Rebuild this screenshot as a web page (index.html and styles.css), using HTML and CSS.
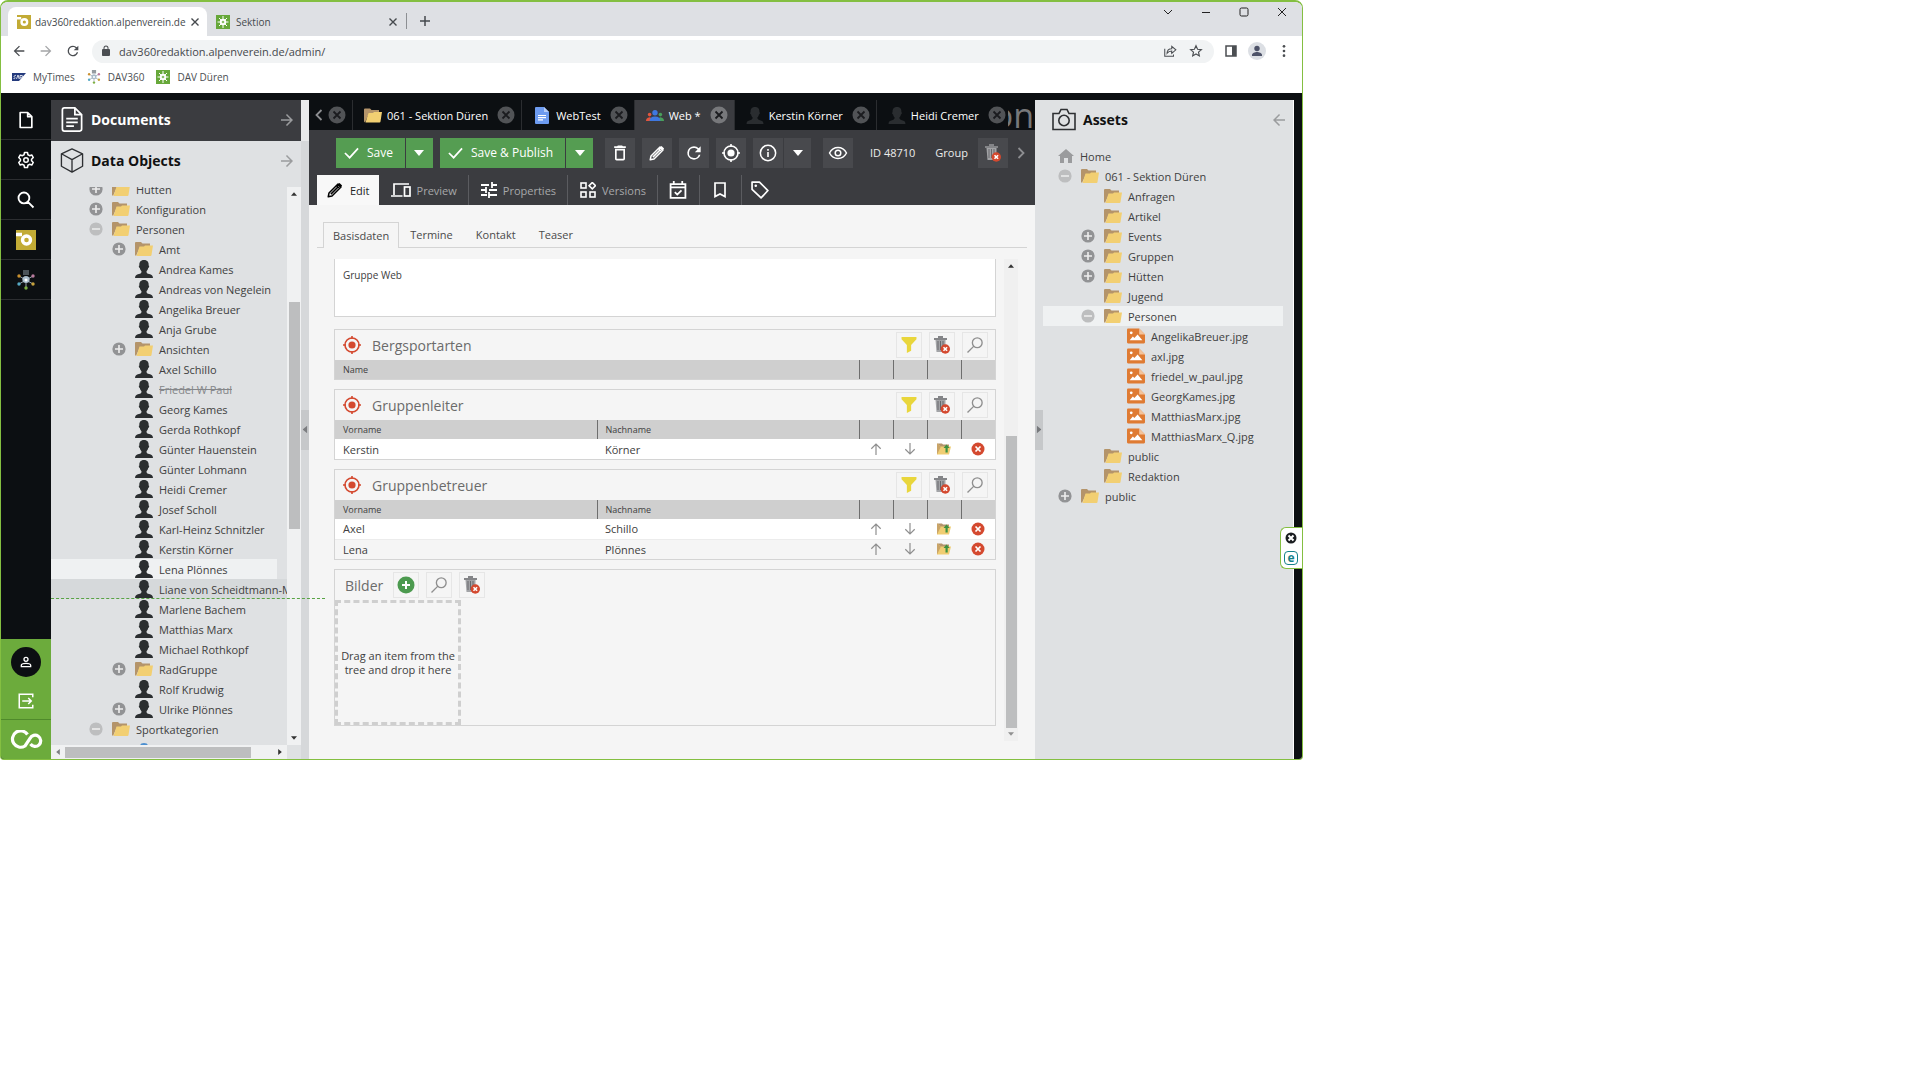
FILE: index.html
```html
<!DOCTYPE html>
<html lang="de">
<head>
    <meta charset="UTF-8">
    <meta name="viewport" content="width=device-width, initial-scale=1.0">
    <title>dav360redaktion.alpenverein.de</title>
    <link rel="stylesheet" href="styles.css">
</head>
<body>

<!-- Icon set -->
<svg class="sprite" aria-hidden="true">
    <symbol id="brand" viewBox="0 0 20 20"><rect width="20" height="20" fill="#c2ab35"/><path d="M0 4.500h6" fill="none" stroke="#fff" stroke-width="3.500"/><circle cx="10.500" cy="10" r="4" fill="none" stroke="#fff" stroke-width="3.400"/></symbol>
    <symbol id="sektion" viewBox="0 0 14 14"><rect width="14" height="14" fill="#67a83a"/><g stroke="#fff" stroke-width="1"><path d="M7 1v12M1.500 7h11M3 3l8 8M11 3l-8 8"/></g><circle cx="7" cy="7" r="3.200" fill="#fff"/><circle cx="7" cy="7" r="1.300" fill="#8cc06a"/></symbol>
    <symbol id="net" viewBox="0 0 20 20"><g stroke="#98a2aa" stroke-width="1"><path d="M10 10v8M10 10L3 6M10 10l7-4M10 10l-7 4M10 10l7 4"/></g><rect x="7" y="0" width="6" height="5" fill="#667078" opacity=".7"/><circle cx="10" cy="9.500" r="3.600" fill="#a9bccb"/><circle cx="10" cy="10" r="1.500" fill="#fff"/><circle cx="3" cy="6" r="1.700" fill="#c9902f"/><circle cx="17" cy="6" r="1.700" fill="#b97b9e"/><circle cx="3" cy="14" r="1.700" fill="#56a9c4"/><circle cx="17" cy="14" r="1.700" fill="#c7a23d"/><circle cx="10" cy="18" r="1.700" fill="#7fb043"/></symbol>
    <symbol id="x" viewBox="0 0 10 10"><path d="M1.500 1.500l7 7M8.500 1.500l-7 7" fill="none" stroke="currentColor" stroke-width="1.400"/></symbol>
    <symbol id="thinx" viewBox="0 0 10 10"><path d="M1 1l8 8M9 1l-8 8" fill="none" stroke="currentColor"/></symbol>
    <symbol id="plus" viewBox="0 0 10 10"><path d="M5 0v10M0 5h10" stroke="currentColor" stroke-width="1.500"/></symbol>
    <symbol id="down" viewBox="0 0 10 10"><path d="M1 3l4 4 4-4" fill="none" stroke="currentColor"/></symbol>
    <symbol id="minus" viewBox="0 0 10 10"><path d="M1 5.500h8" stroke="currentColor"/></symbol>
    <symbol id="max" viewBox="0 0 10 10"><rect x="1" y="1" width="8" height="8" rx="1.500" fill="none" stroke="currentColor"/></symbol>
    <symbol id="arrow" viewBox="0 0 24 24"><path fill="currentColor" d="M20 11H7.830l5.590-5.590L12 4l-8 8 8 8 1.410-1.410L7.830 13H20v-2z"/></symbol>
    <symbol id="reload" viewBox="0 0 24 24"><path fill="currentColor" d="M17.650 6.350A7.960 7.960 0 0 0 12 4a8 8 0 1 0 7.730 10h-2.080A6 6 0 1 1 12 6c1.660 0 3.140.690 4.220 1.780L13 11h7V4l-2.350 2.350z"/></symbol>
    <symbol id="lock" viewBox="0 0 24 24"><path fill="currentColor" d="M18 8h-1V6A5 5 0 0 0 7 6v2H6a2 2 0 0 0-2 2v10c0 1.100.900 2 2 2h12a2 2 0 0 0 2-2V10a2 2 0 0 0-2-2zM9 6a3 3 0 0 1 6 0v2H9V6z"/></symbol>
    <symbol id="share" viewBox="0 0 24 24"><path fill="none" stroke="currentColor" stroke-width="1.800" d="M3 8v13h15v-3M7 16c0-5 3-8 8-8V4l7 6-7 6v-4c-4 0-6 1-8 4z"/></symbol>
    <symbol id="star" viewBox="0 0 24 24"><path fill="none" stroke="currentColor" stroke-width="2" d="M12 3l2.700 6 6.500.700-4.900 4.300 1.400 6.500L12 17.200l-5.700 3.300L7.700 14 2.800 9.700l6.500-.700z"/></symbol>
    <symbol id="side" viewBox="0 0 12 12"><rect x="1" y="1" width="10" height="10" fill="none" stroke="currentColor" stroke-width="1.500"/><rect x="7" y="1" width="4" height="10" fill="currentColor"/></symbol>
    <symbol id="dots" viewBox="0 0 24 24"><g fill="currentColor"><circle cx="12" cy="4" r="2.300"/><circle cx="12" cy="12" r="2.300"/><circle cx="12" cy="20" r="2.300"/></g></symbol>
    <symbol id="avatar" viewBox="0 0 18 18"><circle cx="9" cy="9" r="9" fill="#dcdfe4"/><circle cx="9" cy="6.500" r="2.700" fill="#4d5268"/><path d="M4 14v-1c0-2 3-3 5-3s5 1 5 3v1z" fill="#4d5268"/></symbol>
    <symbol id="sap" viewBox="0 0 14 8"><path d="M0 0h14L7 8H0z" fill="#243a7d"/><path d="M1.500 5.500c2 .500 2-1 1-1.500s0-2 1.500-1.500M4.500 6l1.500-4 1.200 4M8 6V2.500h2c1 0 1 2-1.500 2" fill="none" stroke="#fff" stroke-width=".8"/></symbol>

    <symbol id="file" viewBox="0 0 24 24"><path fill="none" stroke="currentColor" stroke-width="2" stroke-linejoin="round" d="M5 3h9l5 5v13H5zM14 3v5h5"/></symbol>
    <symbol id="gear" viewBox="0 0 24 24"><g fill="none" stroke="currentColor" stroke-width="2" stroke-linejoin="round"><path d="M10 2h4l.600 3 2.200 1.300 2.900-1 2 3.400L19.400 11v2l2.300 2.300-2 3.400-2.900-1-2.200 1.300-.600 3h-4l-.600-3-2.200-1.300-2.900 1-2-3.400L4.600 13v-2L2.300 8.700l2-3.400 2.900 1L9.400 5z"/><circle cx="12" cy="12" r="3"/></g></symbol>
    <symbol id="search" viewBox="0 0 24 24"><path fill="none" stroke="currentColor" stroke-width="2.200" d="M14.500 14.500L21 21M16 9.500a6.500 6.500 0 1 1-13 0 6.500 6.500 0 0 1 13 0z"/></symbol>
    <symbol id="lens" viewBox="0 0 24 24"><g fill="none" stroke="currentColor" stroke-width="1.800"><circle cx="15" cy="9" r="6.500"/><path d="M10.500 13.500L2 22"/></g></symbol>
    <symbol id="user" viewBox="0 0 24 24"><g fill="none" stroke="currentColor" stroke-width="2"><circle cx="12" cy="8" r="3"/><path d="M5 19v-2c0-2 4-3 7-3s7 1 7 3v2z"/></g></symbol>
    <symbol id="logout" viewBox="0 0 24 24"><g fill="none" stroke="currentColor" stroke-width="2"><path d="M21 7V3H3v18h18v-4M7 12h12M15 8l4 4-4 4"/></g></symbol>
    <symbol id="infinity" viewBox="0 0 34 20"><path fill="none" stroke="#fff" stroke-width="3.200" d="M18.500 4.500A8.200 8.200 0 1 0 16 16L21 8.500A5.600 5.600 0 1 1 21.500 14"/></symbol>
    <symbol id="doc" viewBox="0 0 22 26"><g fill="none" stroke="currentColor" stroke-width="1.800"><path d="M1 3q0-2 2-2h11l7 7v15q0 2-2 2H3q-2 0-2-2zM14 1v7h7M5 12h12M5 16h12M5 20h8"/></g></symbol>
    <symbol id="cube" viewBox="0 0 24 26"><path fill="none" stroke="currentColor" stroke-width="1.400" stroke-linejoin="round" d="M12 1l11 5v13l-11 6-11-6V6zM1 6l11 6 11-6M12 12v13"/></symbol>
    <symbol id="camera" viewBox="0 0 24 22"><g fill="none" stroke="currentColor" stroke-width="1.600"><path d="M1 5h6l2-4h6l2 4h6v16H1z"/><circle cx="12" cy="12" r="5.200"/></g></symbol>
    <symbol id="folder" viewBox="0 0 18 14"><path d="M0 1q0-1 1-1h5l1.500 1.500H15V5H5L1 14 0 13z" fill="#b4946a"/><path d="M4.500 4.500H9L10 3.500h8L16.500 13q-.100 1-1 1H1.500z" fill="#f2cf72"/></symbol>
    <symbol id="person" viewBox="0 0 18 18"><path fill="currentColor" d="M9 0c3.500 0 5 2.400 4.600 5.500 1 0 .600 2.200-.400 2.500-.300 1.700-1.200 2.600-1.700 3.200 0 1.800.800 2.400 2.700 2.900 2.400.600 3.600 1.200 3.800 3.900H0c.200-2.700 1.400-3.300 3.800-3.900 1.900-.500 2.700-1.100 2.700-2.900C6 10.600 5.100 9.700 4.800 8c-1-.300-1.400-2.500-.4-2.500C4 2.400 5.500 0 9 0z"/></symbol>
    <symbol id="image" viewBox="0 0 17 14"><path d="M0 1q0-1 1-1h10.500L17 5.500V13q0 1-1 1H1q-1 0-1-1z" fill="#df7b33"/><path d="M11.500 0v5.500H17z" fill="#f3c49c"/><circle cx="4" cy="4" r="1.300" fill="#fff"/><path d="M2.500 11l3-3.500L7 9l3-3.500L14.500 11z" fill="#fff"/></symbol>
    <symbol id="home" viewBox="0 0 16 14"><path d="M8 0l8 7h-2v7h-4V9H6v5H2V7H0z" fill="#9a9b9d"/></symbol>
    <symbol id="tplus" viewBox="0 0 14 14"><circle cx="7" cy="7" r="6.600" fill="#929395"/><path d="M7 3v8M3 7h8" stroke="#eee" stroke-width="1.600"/></symbol>
    <symbol id="tminus" viewBox="0 0 14 14"><circle cx="7" cy="7" r="6.600" fill="#bdbebf"/><path d="M3 7h8" stroke="#eee" stroke-width="1.600"/></symbol>

    <symbol id="tabclose" viewBox="0 0 18 18"><circle cx="9" cy="9" r="8.500" fill="currentColor"/><path d="M5.500 5.500l7 7M12.500 5.500l-7 7" stroke="#1b1c1f" stroke-width="1.800"/></symbol>
    <symbol id="page" viewBox="0 0 14 17"><path d="M0 1q0-1 1-1h8l5 5v11q0 1-1 1H1q-1 0-1-1z" fill="#6d9bf0"/><path d="M9 0v5h5z" fill="#b6cdf8"/><path d="M3 8.500h8M3 10.700h8M3 12.900h5" stroke="#fff" stroke-width="1.200"/></symbol>
    <symbol id="people" viewBox="0 0 20 12"><circle cx="4" cy="5" r="2" fill="#e2553d"/><path d="M0 12q0-3.500 4-4l3 1-2 3z" fill="#e2553d"/><circle cx="16" cy="5" r="2" fill="#49a05b"/><path d="M20 12q0-3.500-4-4l-3 1 2 3z" fill="#49a05b"/><circle cx="10" cy="3" r="3" fill="#3f78e0"/><path d="M4 12q0-5 6-5t6 5z" fill="#3f78e0"/></symbol>
    <symbol id="check" viewBox="0 0 16 12"><path d="M1 6l5 5L15 1" fill="none" stroke="#fff" stroke-width="1.800"/></symbol>
    <symbol id="caret" viewBox="0 0 10 6"><path d="M0 0h10L5 6z" fill="currentColor"/></symbol>
    <symbol id="trash" viewBox="0 0 24 24"><path fill="currentColor" d="M6 19c0 1.100.900 2 2 2h8a2 2 0 0 0 2-2V7H6v12zM8 9h8v10H8V9zm7.500-5l-1-1h-5l-1 1H5v2h14V4z"/></symbol>
    <symbol id="pencil" viewBox="0 0 24 24"><path fill="none" stroke="currentColor" stroke-width="2" stroke-linejoin="round" d="M3 21l1-5L16 4l4 4L8 20zM14 6l4 4M6.500 17.500l9-9"/><path d="M15 5l3-2.500L21.500 6 19 9z" fill="currentColor"/></symbol>
    <symbol id="target" viewBox="0 0 20 20"><g fill="none" stroke="currentColor" stroke-width="1.600"><circle cx="10" cy="10" r="7"/><path d="M10 1v3M10 16v3M1 10h3M16 10h3"/></g><circle cx="10" cy="10" r="3.600" fill="currentColor"/></symbol>
    <symbol id="info" viewBox="0 0 20 20"><circle cx="10" cy="10" r="8.500" fill="none" stroke="currentColor" stroke-width="1.700"/><path d="M10 9v5.500M10 5.500v2" stroke="currentColor" stroke-width="1.800"/></symbol>
    <symbol id="eye" viewBox="0 0 20 14"><g fill="none" stroke="currentColor" stroke-width="1.500"><path d="M1.500 7Q4.500 1.500 10 1.500T18.500 7Q15.500 12.500 10 12.500T1.500 7z"/><circle cx="10" cy="7" r="2.800"/></g></symbol>
    <symbol id="trashx" viewBox="0 0 16 18"><path d="M0 2h4V0h5v2h4v2H0z" fill="#848588"/><path d="M1.500 4h10v12h-9z" fill="#a2a3a6"/><path d="M4 5v9M6.500 5v9M9 5v9" stroke="#68696c"/><circle cx="11.300" cy="13" r="4.700" fill="#d4492f"/><path d="M9.500 11.200l3.600 3.600M13.100 11.200l-3.600 3.600" stroke="#fff" stroke-width="1.600"/></symbol>
    <symbol id="chev" viewBox="0 0 8 12"><path d="M1.500 1l5 5-5 5" fill="none" stroke="currentColor" stroke-width="1.800"/></symbol>
    <symbol id="devices" viewBox="0 0 20 14"><g fill="none" stroke="currentColor" stroke-width="1.700"><path d="M18 1H3v11M0 13h11.500"/><rect x="13.500" y="4" width="5.500" height="9"/></g></symbol>
    <symbol id="sliders" viewBox="0 0 16 16"><path fill="none" stroke="currentColor" stroke-width="1.800" d="M0 3h8M11 3h5M11 0v6M0 8h5M5 5v6M8 8h8M0 13h6M8 10v6M8 13h8"/></symbol>
    <symbol id="blocks" viewBox="0 0 16 16"><g fill="none" stroke="currentColor" stroke-width="1.600"><rect x="1" y="1" width="5" height="5"/><rect x="1" y="10" width="5" height="5"/><rect x="10" y="10" width="5" height="5"/><path d="M12.300.500l3.200 3.200-3.200 3.200L9.100 3.700z"/></g></symbol>
    <symbol id="calendar" viewBox="0 0 16 17"><g fill="none" stroke="currentColor" stroke-width="1.700"><path d="M1 3h14v13H1zM1 6h14M4 0v3M12 0v3M5 10.500l2.300 2.300 4-4"/></g></symbol>
    <symbol id="mark" viewBox="0 0 12 16"><path fill="none" stroke="currentColor" stroke-width="1.700" d="M1 1h10v13.500l-5-2.500-5 2.500z"/></symbol>
    <symbol id="tag" viewBox="0 0 17 17"><path fill="none" stroke="currentColor" stroke-width="1.600" stroke-linejoin="round" d="M1 1h7l8 8-6.500 7L1 8z"/><circle cx="4.500" cy="4.500" r="1.200" fill="currentColor"/></symbol>
    <symbol id="funnel" viewBox="0 0 14 15"><path d="M0 0h14v2L9 7.500V13l-4 2V7.500L0 2z" fill="#e9d63c"/></symbol>
    <symbol id="up" viewBox="0 0 10 11"><path d="M5 11V1M.700 5.300L5 1l4.300 4.300" fill="none" stroke="#8f8f8f" stroke-width="1.100"/></symbol>
    <symbol id="open" viewBox="0 0 14 11"><path d="M0 0h5l1 1h6v3H3z" fill="#b4946a"/><path d="M0 0v11h12l2-8H4z" fill="#f0cd72"/><path d="M0 0v11L4 3z" fill="#c9a468"/><path d="M9.500 1l3.200 3.500h-2V9H8.500V4.500h-2z" fill="#3d9140"/></symbol>
    <symbol id="remove" viewBox="0 0 14 14"><circle cx="7" cy="7" r="6.500" fill="#d4492f"/><path d="M4.500 4.500l5 5M9.500 4.500l-5 5" stroke="#fff" stroke-width="1.700"/></symbol>
    <symbol id="add" viewBox="0 0 18 18"><circle cx="9" cy="9" r="8.500" fill="#4c9a4f"/><path d="M9 5v8M5 9h8" stroke="#fff" stroke-width="2"/></symbol>
    <symbol id="blackx" viewBox="0 0 12 12"><circle cx="6" cy="6" r="5.500" fill="#1a1d20"/><path d="M3.500 3.500l5 5M8.500 3.500l-5 5" stroke="#fff" stroke-width="2"/></symbol>
</svg>

<div class="window">

    <!-- Browser tabs -->
    <div class="tabstrip">
        <div class="btab btab-active"><svg class="i14"><use href="#brand"/></svg><span class="btab-title">dav360redaktion.alpenverein.de</span><button aria-label="Tab schließen"><svg class="i10"><use href="#x"/></svg></button></div>
        <div class="btab"><svg class="i14"><use href="#sektion"/></svg><span class="btab-title">Sektion</span><button aria-label="Tab schließen"><svg class="i10"><use href="#x"/></svg></button></div>
        <button class="newtab" aria-label="Neuer Tab"><svg class="i10"><use href="#plus"/></svg></button>
        <div class="winctl">
            <button aria-label="Tabs suchen"><svg class="i10"><use href="#down"/></svg></button>
            <button aria-label="Minimieren"><svg class="i10"><use href="#minus"/></svg></button>
            <button aria-label="Maximieren"><svg class="i10"><use href="#max"/></svg></button>
            <button aria-label="Schließen"><svg class="i10"><use href="#thinx"/></svg></button>
        </div>
    </div>
    <div class="addressbar">
        <button aria-label="Zurück"><svg class="i16"><use href="#arrow"/></svg></button>
        <button class="faded" aria-label="Vorwärts"><svg class="i16 flip"><use href="#arrow"/></svg></button>
        <button aria-label="Neu laden"><svg class="i16"><use href="#reload"/></svg></button>
        <div class="omnibox">
            <svg class="i12"><use href="#lock"/></svg>
            <input type="text" aria-label="Adresse" value="dav360redaktion.alpenverein.de/admin/">
            <button aria-label="Teilen"><svg class="i14"><use href="#share"/></svg></button>
            <button aria-label="Lesezeichen"><svg class="i14"><use href="#star"/></svg></button>
        </div>
        <button aria-label="Seitenleiste"><svg class="i12"><use href="#side"/></svg></button>
        <button aria-label="Profil"><svg class="i18"><use href="#avatar"/></svg></button>
        <button aria-label="Menü"><svg class="i14"><use href="#dots"/></svg></button>
    </div>
    <div class="bookmarks">
        <a href="#"><svg class="i14"><use href="#sap"/></svg>MyTimes</a>
        <a href="#"><svg class="i14"><use href="#net"/></svg>DAV360</a>
        <a href="#"><svg class="i14"><use href="#sektion"/></svg>DAV Düren</a>
    </div>

    <div class="app">

        <!-- Left icon rail -->
        <nav class="rail">
            <button aria-label="Datei"><svg class="i20"><use href="#file"/></svg></button>
            <button aria-label="Einstellungen"><svg class="i18"><use href="#gear"/></svg></button>
            <button aria-label="Suche"><svg class="i20"><use href="#search"/></svg></button>
            <button aria-label="Redaktion"><svg class="i20"><use href="#brand"/></svg></button>
            <button aria-label="DAV360"><svg class="i20"><use href="#net"/></svg></button>
            <div class="rail-bottom">
                <button class="rail-user" aria-label="Benutzer"><svg class="i16"><use href="#user"/></svg></button>
                <button class="rail-out" aria-label="Abmelden"><svg class="i18"><use href="#logout"/></svg></button>
                <a class="rail-logo" href="#" aria-label="Pimcore"><svg><use href="#infinity"/></svg></a>
            </div>
        </nav>

        <!-- Documents / Data Objects -->
        <aside class="side">
            <div class="side-main">
                <h2 class="side-head side-head-dark"><svg class="i24"><use href="#doc"/></svg>Documents<button aria-label="Nach rechts"><svg class="i18 flip"><use href="#arrow"/></svg></button></h2>
                <h2 class="side-head"><svg class="i24"><use href="#cube"/></svg>Data Objects<button aria-label="Nach rechts"><svg class="i18 flip"><use href="#arrow"/></svg></button></h2>
                <div class="tree-wrap">
                    <ul class="tree tree-scrolled">
                        <li class="l1"><svg><use href="#tplus"/></svg><svg class="ico"><use href="#folder"/></svg>Hütten</li>
                        <li class="l1"><svg><use href="#tplus"/></svg><svg class="ico"><use href="#folder"/></svg>Konfiguration</li>
                        <li class="l1"><svg><use href="#tminus"/></svg><svg class="ico"><use href="#folder"/></svg>Personen</li>
                        <li class="l2"><svg><use href="#tplus"/></svg><svg class="ico"><use href="#folder"/></svg>Amt</li>
                        <li class="l3"><svg class="ico"><use href="#person"/></svg>Andrea Kames</li>
                        <li class="l3"><svg class="ico"><use href="#person"/></svg>Andreas von Negelein</li>
                        <li class="l3"><svg class="ico"><use href="#person"/></svg>Angelika Breuer</li>
                        <li class="l3"><svg class="ico"><use href="#person"/></svg>Anja Grube</li>
                        <li class="l2"><svg><use href="#tplus"/></svg><svg class="ico"><use href="#folder"/></svg>Ansichten</li>
                        <li class="l3"><svg class="ico"><use href="#person"/></svg>Axel Schillo</li>
                        <li class="l3"><svg class="ico"><use href="#person"/></svg><s>Friedel W Paul</s></li>
                        <li class="l3"><svg class="ico"><use href="#person"/></svg>Georg Kames</li>
                        <li class="l3"><svg class="ico"><use href="#person"/></svg>Gerda Rothkopf</li>
                        <li class="l3"><svg class="ico"><use href="#person"/></svg>Günter Hauenstein</li>
                        <li class="l3"><svg class="ico"><use href="#person"/></svg>Günter Lohmann</li>
                        <li class="l3"><svg class="ico"><use href="#person"/></svg>Heidi Cremer</li>
                        <li class="l3"><svg class="ico"><use href="#person"/></svg>Josef Scholl</li>
                        <li class="l3"><svg class="ico"><use href="#person"/></svg>Karl-Heinz Schnitzler</li>
                        <li class="l3"><svg class="ico"><use href="#person"/></svg>Kerstin Körner</li>
                        <li class="l3 selected"><svg class="ico"><use href="#person"/></svg>Lena Plönnes</li>
                        <li class="l3 hovered"><svg class="ico"><use href="#person"/></svg>Liane von Scheidtmann-M</li>
                        <li class="l3"><svg class="ico"><use href="#person"/></svg>Marlene Bachem</li>
                        <li class="l3"><svg class="ico"><use href="#person"/></svg>Matthias Marx</li>
                        <li class="l3"><svg class="ico"><use href="#person"/></svg>Michael Rothkopf</li>
                        <li class="l2"><svg><use href="#tplus"/></svg><svg class="ico"><use href="#folder"/></svg>RadGruppe</li>
                        <li class="l3"><svg class="ico"><use href="#person"/></svg>Rolf Krudwig</li>
                        <li class="l2"><svg><use href="#tplus"/></svg><svg class="ico"><use href="#person"/></svg>Ulrike Plönnes</li>
                        <li class="l1"><svg><use href="#tminus"/></svg><svg class="ico"><use href="#folder"/></svg>Sportkategorien</li>
                        <li class="l3"><span class="blue-tip"></span></li>
                    </ul>
                    <div class="vbar"><svg class="arr arr-up"><use href="#caret"/></svg><div class="thumb"></div><svg class="arr"><use href="#caret"/></svg></div>
                </div>
                <div class="hbar"><svg class="arr arr-left"><use href="#caret"/></svg><div class="thumb"></div><svg class="arr arr-right"><use href="#caret"/></svg></div>
            </div>
            <div class="splitter"><button aria-label="Einklappen"><svg class="arr arr-left"><use href="#caret"/></svg></button></div>
            <div class="dropline"></div>
        </aside>

        <!-- Editor -->
        <main class="editor">
            <div class="otabs">
                <button class="oscroll" aria-label="Tabs zurück"><svg class="chev-l"><use href="#chev"/></svg></button>
                <div class="otab otab-first"><button aria-label="Schließen"><svg class="i18"><use href="#tabclose"/></svg></button></div>
                <div class="otab"><svg class="ico"><use href="#folder"/></svg><span>061 - Sektion Düren</span><button aria-label="Schließen"><svg class="i18"><use href="#tabclose"/></svg></button></div>
                <div class="otab"><svg class="ico"><use href="#page"/></svg><span>WebTest</span><button aria-label="Schließen"><svg class="i18"><use href="#tabclose"/></svg></button></div>
                <div class="otab otab-active"><svg class="ico"><use href="#people"/></svg><span>Web *</span><button aria-label="Schließen"><svg class="i18"><use href="#tabclose"/></svg></button></div>
                <div class="otab"><svg class="ico dim"><use href="#person"/></svg><span>Kerstin Körner</span><button aria-label="Schließen"><svg class="i18"><use href="#tabclose"/></svg></button></div>
                <div class="otab otab-last"><svg class="ico dim"><use href="#person"/></svg><span>Heidi Cremer</span><button aria-label="Schließen"><svg class="i18"><use href="#tabclose"/></svg></button></div>
                <div class="wordmark"><span>on</span></div>
            </div>

            <div class="toolbar">
                <div class="split"><button class="green"><svg class="chk"><use href="#check"/></svg>Save</button><button class="green more" aria-label="Mehr"><svg class="dd"><use href="#caret"/></svg></button></div>
                <div class="split"><button class="green"><svg class="chk"><use href="#check"/></svg>Save &amp; Publish</button><button class="green more" aria-label="Mehr"><svg class="dd"><use href="#caret"/></svg></button></div>
                <button class="tool gap-left" aria-label="Löschen"><svg class="i20"><use href="#trash"/></svg></button>
                <button class="tool" aria-label="Umbenennen"><svg class="i18"><use href="#pencil"/></svg></button>
                <button class="tool" aria-label="Neu laden"><svg class="i20"><use href="#reload"/></svg></button>
                <button class="tool" aria-label="Im Baum zeigen"><svg class="i20"><use href="#target"/></svg></button>
                <div class="split"><button class="tool" aria-label="Info"><svg class="i18"><use href="#info"/></svg></button><button class="tool more" aria-label="Mehr"><svg class="dd"><use href="#caret"/></svg></button></div>
                <button class="tool gap-left" aria-label="Vorschau"><svg class="i20"><use href="#eye"/></svg></button>
                <span class="meta">ID 48710</span>
                <span class="meta">Group</span>
                <button class="tool" aria-label="Leeren"><svg class="i18"><use href="#trashx"/></svg></button>
                <button class="oscroll" aria-label="Weiter"><svg class="chev-r"><use href="#chev"/></svg></button>
            </div>

            <div class="subtabs">
                <button class="on"><svg class="i18"><use href="#pencil"/></svg>Edit</button>
                <button><svg class="i20"><use href="#devices"/></svg>Preview</button>
                <button><svg class="i16"><use href="#sliders"/></svg>Properties</button>
                <button><svg class="i16"><use href="#blocks"/></svg>Versions</button>
                <button class="bare" aria-label="Termine"><svg class="i18"><use href="#calendar"/></svg></button>
                <button class="bare" aria-label="Notizen"><svg class="i16"><use href="#mark"/></svg></button>
                <button class="bare" aria-label="Tags"><svg class="i18"><use href="#tag"/></svg></button>
            </div>

            <div class="ftabs">
                <button class="on">Basisdaten</button><button>Termine</button><button>Kontakt</button><button>Teaser</button>
            </div>

            <div class="scroller">
                <div class="form">
                    <textarea aria-label="Beschreibung">Gruppe Web</textarea>

                    <section class="card">
                        <h3><svg class="i20"><use href="#target"/></svg><span>Bergsportarten</span>
                            <button class="mini" aria-label="Filter"><svg class="i16"><use href="#funnel"/></svg></button><button class="mini" aria-label="Leeren"><svg class="i18"><use href="#trashx"/></svg></button><button class="mini" aria-label="Suchen"><svg class="i18"><use href="#lens"/></svg></button></h3>
                        <table>
                            <thead><tr><th>Name</th><th class="act"></th><th class="act"></th><th class="act"></th><th class="act"></th></tr></thead>
                        </table>
                    </section>

                    <section class="card">
                        <h3><svg class="i20"><use href="#target"/></svg><span>Gruppenleiter</span>
                            <button class="mini" aria-label="Filter"><svg class="i16"><use href="#funnel"/></svg></button><button class="mini" aria-label="Leeren"><svg class="i18"><use href="#trashx"/></svg></button><button class="mini" aria-label="Suchen"><svg class="i18"><use href="#lens"/></svg></button></h3>
                        <table>
                            <thead><tr><th>Vorname</th><th>Nachname</th><th class="act"></th><th class="act"></th><th class="act"></th><th class="act"></th></tr></thead>
                            <tbody>
                                <tr><td>Kerstin</td><td>Körner</td><td><svg class="i12"><use href="#up"/></svg></td><td><svg class="i12 turn"><use href="#up"/></svg></td><td><svg class="i14"><use href="#open"/></svg></td><td><svg class="i14"><use href="#remove"/></svg></td></tr>
                            </tbody>
                        </table>
                    </section>

                    <section class="card">
                        <h3><svg class="i20"><use href="#target"/></svg><span>Gruppenbetreuer</span>
                            <button class="mini" aria-label="Filter"><svg class="i16"><use href="#funnel"/></svg></button><button class="mini" aria-label="Leeren"><svg class="i18"><use href="#trashx"/></svg></button><button class="mini" aria-label="Suchen"><svg class="i18"><use href="#lens"/></svg></button></h3>
                        <table>
                            <thead><tr><th>Vorname</th><th>Nachname</th><th class="act"></th><th class="act"></th><th class="act"></th><th class="act"></th></tr></thead>
                            <tbody>
                                <tr><td>Axel</td><td>Schillo</td><td><svg class="i12"><use href="#up"/></svg></td><td><svg class="i12 turn"><use href="#up"/></svg></td><td><svg class="i14"><use href="#open"/></svg></td><td><svg class="i14"><use href="#remove"/></svg></td></tr>
                                <tr><td>Lena</td><td>Plönnes</td><td><svg class="i12"><use href="#up"/></svg></td><td><svg class="i12 turn"><use href="#up"/></svg></td><td><svg class="i14"><use href="#open"/></svg></td><td><svg class="i14"><use href="#remove"/></svg></td></tr>
                            </tbody>
                        </table>
                    </section>

                    <section class="card pictures">
                        <h3>Bilder
                            <button class="mini" aria-label="Hinzufügen"><svg class="i18"><use href="#add"/></svg></button><button class="mini" aria-label="Suchen"><svg class="i18"><use href="#lens"/></svg></button><button class="mini" aria-label="Leeren"><svg class="i18"><use href="#trashx"/></svg></button></h3>
                        <div class="dropzone">Drag an item from the tree and drop it here</div>
                    </section>
                </div>
                <div class="vbar vbar-form"><svg class="arr arr-up"><use href="#caret"/></svg><div class="thumb"></div><svg class="arr faded"><use href="#caret"/></svg></div>
            </div>
        </main>

        <!-- Assets -->
        <aside class="assets">
            <div class="splitter"><button aria-label="Einklappen"><svg class="arr arr-right"><use href="#caret"/></svg></button></div>
            <div class="assets-main">
                <h2 class="side-head"><svg class="i24"><use href="#camera"/></svg>Assets<button aria-label="Nach links"><svg class="i18"><use href="#arrow"/></svg></button></h2>
                <ul class="tree">
                    <li class="l0 root"><svg><use href="#home"/></svg>Home</li>
                    <li class="l0"><svg><use href="#tminus"/></svg><svg class="ico"><use href="#folder"/></svg>061 - Sektion Düren</li>
                    <li class="l2"><svg class="ico"><use href="#folder"/></svg>Anfragen</li>
                    <li class="l2"><svg class="ico"><use href="#folder"/></svg>Artikel</li>
                    <li class="l1"><svg><use href="#tplus"/></svg><svg class="ico"><use href="#folder"/></svg>Events</li>
                    <li class="l1"><svg><use href="#tplus"/></svg><svg class="ico"><use href="#folder"/></svg>Gruppen</li>
                    <li class="l1"><svg><use href="#tplus"/></svg><svg class="ico"><use href="#folder"/></svg>Hütten</li>
                    <li class="l2"><svg class="ico"><use href="#folder"/></svg>Jugend</li>
                    <li class="l1 selected"><svg><use href="#tminus"/></svg><svg class="ico"><use href="#folder"/></svg>Personen</li>
                    <li class="l3"><svg class="ico"><use href="#image"/></svg>AngelikaBreuer.jpg</li>
                    <li class="l3"><svg class="ico"><use href="#image"/></svg>axl.jpg</li>
                    <li class="l3"><svg class="ico"><use href="#image"/></svg>friedel_w_paul.jpg</li>
                    <li class="l3"><svg class="ico"><use href="#image"/></svg>GeorgKames.jpg</li>
                    <li class="l3"><svg class="ico"><use href="#image"/></svg>MatthiasMarx.jpg</li>
                    <li class="l3"><svg class="ico"><use href="#image"/></svg>MatthiasMarx_Q.jpg</li>
                    <li class="l2"><svg class="ico"><use href="#folder"/></svg>public</li>
                    <li class="l2"><svg class="ico"><use href="#folder"/></svg>Redaktion</li>
                    <li class="l0"><svg><use href="#tplus"/></svg><svg class="ico"><use href="#folder"/></svg>public</li>
                </ul>
            </div>
        </aside>
    </div>

    <div class="float">
        <button aria-label="Ausblenden"><svg class="i12"><use href="#blackx"/></svg></button>
        <button class="eye-able">e</button>
    </div>
</div>

</body>
</html>
```

FILE: styles.css
```css
* {
    box-sizing: border-box;
}
body, html {
    margin: 0;
    padding: 0;
    background: #fff;
    font-family: "Open Sans", "Noto Sans", sans-serif;
    font-size: 11px;
    color: #404040;
}
body {
    min-height: 100vh;
    padding-right: 617px;
}
button {
    display: flex;
    align-items: center;
    justify-content: center;
    padding: 0;
    border: none;
    background: none;
    color: inherit;
    font: inherit;
    white-space: nowrap;
    cursor: pointer;
}
a {
    color: inherit;
    text-decoration: none;
}
h2, h3, ul {
    margin: 0;
    padding: 0;
}
svg {
    display: block;
    flex: none;
}
.sprite {
    position: absolute;
    width: 0;
    height: 0;
}
.i10 { width: 10px; height: 10px; }
.i12 { width: 12px; height: 12px; }
.i14 { width: 14px; height: 14px; }
.i16 { width: 16px; height: 16px; }
.i18 { width: 18px; height: 18px; }
.i20 { width: 20px; height: 20px; }
.i24 { width: 24px; height: 25px; }
.flip { transform: scaleX(-1); }
.turn { transform: rotate(180deg); }
.faded { opacity: 0.5; }

/* Browser window */
.window {
    position: relative;
    display: flex;
    flex-direction: column;
    height: calc(100vh - 320px);
    border: 1px solid #84bf41;
    border-top-width: 2px;
    border-radius: 8px 8px 4px 4px;
    overflow: hidden;
}
.tabstrip {
    display: flex;
    height: 34px;
    padding: 5px 15px 0 7px;
    background: #dee0e4;
    color: #45494d;
}
.btab {
    display: flex;
    align-items: center;
    gap: 6px;
    width: 199px;
    padding: 0 8px 0 9px;
    border-radius: 8px 8px 0 0;
    font-size: 10px;
}
.btab-active {
    gap: 4px;
    background: #fff;
}
.btab-title {
    flex: 1;
    white-space: nowrap;
}
.newtab {
    width: 36px;
    border-left: 1px solid #8c8f93;
    height: 16px;
    margin: 6px 0;
}
.winctl {
    display: flex;
    gap: 28px;
    height: 10px;
    margin-left: auto;
    color: #222;
}
.addressbar {
    display: flex;
    align-items: center;
    gap: 11px;
    height: 30px;
    padding: 0 11px 0 10px;
    background: #fff;
    color: #4b4e52;
}
.omnibox {
    display: flex;
    flex: 1;
    align-items: center;
    gap: 12px;
    height: 23px;
    padding: 0 11px 0 8px;
    border-radius: 12px;
    background: #f1f3f4;
}
.omnibox input {
    flex: 1;
    margin-left: -5px;
    padding: 0;
    border: none;
    outline: none;
    background: none;
    color: #45484c;
    font-family: inherit;
    font-size: 11px;
}
.bookmarks {
    display: flex;
    align-items: center;
    gap: 12px;
    height: 27px;
    padding: 0 11px 5px;
    background: #fff;
    color: #4c4f53;
    font-size: 10px;
}
.bookmarks a {
    display: flex;
    align-items: center;
    gap: 7px;
}

/* Application shell */
.app {
    display: grid;
    grid-template-columns: 50px 258px 1fr 267px;
    flex: 1;
    min-height: 0;
    padding-top: 7px;
    background: #0c0f12;
}
.rail {
    display: flex;
    flex-direction: column;
    color: #fff;
}
.rail > button {
    height: 40px;
    border-bottom: 1px solid #2c2e31;
}
.rail-bottom {
    display: flex;
    flex-direction: column;
    align-items: center;
    height: 120px;
    margin-top: auto;
    background: #6cab3c;
}
.rail-user {
    width: 30px;
    height: 30px;
    margin-top: 8px;
    border-radius: 50%;
    background: #0c0f12;
}
.rail-out {
    height: 42px;
    padding-top: 6px;
}
.rail-logo {
    display: flex;
    flex: 1;
    align-items: center;
    justify-content: center;
    width: 100%;
    border-top: 1px solid #4f8a2b;
}
.rail-logo svg {
    width: 34px;
    height: 20px;
}

/* Side panels and trees */
.side {
    position: relative;
    display: flex;
    min-height: 0;
    background: #dfe1e3;
}
.side-main {
    display: flex;
    flex: 1;
    flex-direction: column;
    min-width: 0;
    min-height: 0;
}
.side-head {
    display: flex;
    align-items: center;
    gap: 7px;
    height: 40px;
    padding: 0 5px 1px 9px;
    color: #111;
    font-size: 14px;
    font-weight: 700;
}
.side-head > svg {
    color: #2e3033;
}
.side-head button {
    margin-left: auto;
    color: #9b9c9e;
}
.side-head-dark, .side-head-dark > svg {
    color: #fff;
}
.side-head-dark {
    height: 41px;
    padding-bottom: 2px;
    background: #3b3c40;
}
.tree-wrap {
    display: flex;
    flex: 1;
    min-height: 0;
    margin-top: 6px;
    overflow: hidden;
}
.tree {
    flex: 1;
    min-width: 0;
    overflow: hidden;
    list-style: none;
    font-size: 11px;
}
.tree-scrolled {
    margin-top: -8px;
}
.tree li {
    display: flex;
    align-items: center;
    height: 20px;
    white-space: nowrap;
}
.tree li > svg {
    width: 14px;
    height: 14px;
    margin-right: 9px;
}
.tree li > svg.ico {
    width: 18px;
    height: 18px;
    margin-right: 6px;
    color: #2b2e30;
}
.tree s {
    color: #85878a;
}
.tree .l0 { padding-left: 15px; }
.tree .l1 { padding-left: 38px; }
.tree .l2 { padding-left: 61px; }
.tree .l3 { padding-left: 84px; }
.tree .root > svg {
    width: 16px;
    margin-right: 6px;
}
.tree .selected {
    margin-right: 10px;
    background: #eff1f2;
}
.tree .hovered {
    background: #d6d9db;
}
.blue-tip {
    align-self: flex-start;
    width: 8px;
    height: 6px;
    margin: 4px 0 0 5px;
    border-radius: 50% 50% 0 0;
    background: #4c8fd0;
}
.vbar {
    display: flex;
    flex-direction: column;
    align-items: center;
    justify-content: space-between;
    width: 14px;
    padding: 5px 0;
    background: #f0f1f2;
    color: #333;
}
.vbar .thumb {
    width: 11px;
    height: 227px;
    margin-bottom: 101px;
    background: #bdbebf;
}
.hbar {
    display: flex;
    align-items: center;
    justify-content: space-between;
    width: 236px;
    height: 14px;
    padding: 0 4px;
    background: #f0f1f2;
    color: #333;
}
.hbar .thumb {
    width: 186px;
    height: 11px;
    margin-right: 22px;
    background: #bdbebf;
}
.arr {
    width: 6px;
    height: 4px;
}
.arr-up { transform: rotate(180deg); }
.arr-left { transform: rotate(90deg); color: #7b7d80; }
.arr-right { transform: rotate(-90deg); }
.splitter {
    display: flex;
    align-items: center;
    width: 8px;
}
.side .splitter {
    background: linear-gradient(#e9eaeb 41px, #d6d8da 41px);
}
.splitter button {
    width: 8px;
    height: 40px;
    background: #c6c8ca;
    color: #77797c;
}
.splitter .arr {
    width: 8px;
    height: 5px;
}
/* drag indicator across the tree */
.dropline {
    position: absolute;
    top: 498px;
    left: 0;
    right: -16px;
    border-top: 1px dashed #58a344;
    z-index: 2;
}

/* Open element tabs */
.editor {
    display: flex;
    flex-direction: column;
    min-width: 0;
    min-height: 0;
    background: #f5f5f5;
}
.otabs {
    display: flex;
    height: 30px;
    background: #0c0f12;
    color: #fff;
    overflow: hidden;
}
.oscroll {
    width: 19px;
    color: #8c8d90;
}
.chev-l, .chev-r {
    width: 8px;
    height: 12px;
}
.chev-l { transform: scaleX(-1); }
.otab {
    display: flex;
    align-items: center;
    padding: 0 6px 0 11px;
    border-right: 1px solid #2b2d30;
    white-space: nowrap;
}
.otab-first {
    padding-left: 0;
}
.otab-last {
    padding-right: 2px;
    border: none;
}
.otab .ico {
    width: 18px;
    height: 17px;
    margin-right: 5px;
}
.otab button {
    margin-left: 9px;
    color: #515356;
}
.otab-first button {
    margin-left: 0;
}
.otab .dim {
    color: #2a2d30;
}
.otab-active {
    background: #3b3c40;
}
.otab-active button {
    color: #77787b;
}
.wordmark {
    display: flex;
    flex: 1;
    align-items: center;
    justify-content: flex-end;
    min-width: 0;
    padding-right: 1px;
    overflow: hidden;
    color: #77787a;
    font-size: 34px;
    line-height: 30px;
}

/* Toolbar */
.toolbar {
    display: flex;
    align-items: center;
    gap: 7px;
    height: 45px;
    padding-left: 27px;
    background: #3b3c40;
    color: #fff;
}
.split {
    display: flex;
    flex: none;
    gap: 1px;
}
.green {
    height: 30px;
    padding: 0 12px 0 8px;
    background: #559d52;
    font-size: 12px;
}
.chk {
    width: 15px;
    height: 12px;
    margin-right: 8px;
}
.dd {
    width: 10px;
    height: 6px;
}
.toolbar .more {
    width: 27px;
    padding: 0;
}
.tool {
    width: 30px;
    height: 30px;
    background: #48494d;
}
.gap-left {
    margin-left: 5px;
}
.meta {
    padding: 0 3px 0 10px;
    color: #ececec;
    white-space: nowrap;
}
.toolbar .oscroll {
    margin-left: -3px;
}
.subtabs {
    display: flex;
    height: 30px;
    padding-left: 8px;
    background: #3b3c40;
    color: #a7a8aa;
}
.subtabs button {
    gap: 6px;
    padding: 0 11px 0 12px;
    border-right: 1px solid #5b5c60;
    font-size: 11px;
}
.subtabs svg {
    color: #fff;
}
.subtabs .bare {
    width: 42px;
    padding: 0;
}
.subtabs .bare:last-child {
    width: 36px;
    border: none;
}
.subtabs .on {
    border: none;
    background: #f8f8f8;
    color: #222;
    padding: 0 9px;
}
.subtabs .on svg {
    color: #000;
}

/* Form tabs */
.ftabs {
    display: flex;
    align-items: flex-end;
    height: 43px;
    margin: 0 8px;
    padding-left: 6px;
    border-bottom: 1px solid #d4d4d4;
}
.ftabs button {
    height: 26px;
    padding: 0 12px 0 11px;
    color: #4a4a4a;
}
.ftabs .on {
    padding: 0 9px;
    margin-bottom: -1px;
    border: 1px solid #d4d4d4;
    border-bottom: none;
    background: #f5f5f5;
}

/* Form */
.scroller {
    display: flex;
    flex: 1;
    gap: 8px;
    min-height: 0;
    padding: 11px 17px 18px 25px;
}
.form {
    display: flex;
    flex: 1;
    flex-direction: column;
    min-width: 0;
}
.form textarea {
    width: 100%;
    height: 58px;
    padding: 8px;
    border: 1px solid #d4d4d4;
    border-top: none;
    background: #fff;
    color: #404040;
    font-family: inherit;
    font-size: 10px;
    line-height: 16px;
    resize: none;
    outline: none;
}
.card {
    margin-top: 9px;
    border: 1px solid #d4d4d4;
}
.form textarea + .card {
    margin-top: 12px;
}
.card h3 {
    display: flex;
    align-items: center;
    gap: 7px;
    height: 30px;
    padding: 0 7px;
    color: #6b6b6b;
    font-size: 14px;
    font-weight: 400;
}
.card h3 > svg {
    color: #d4492f;
}
.card h3 > span {
    flex: 1;
    padding-left: 3px;
}
.mini {
    width: 26px;
    height: 26px;
    border: 1px solid #e6e6e6;
    color: #8f8f8f;
}
.card table {
    width: 100%;
    border-collapse: collapse;
    table-layout: fixed;
}
.card th {
    height: 19px;
    padding: 0 8px;
    background: #cfcfcf;
    font-size: 9px;
    font-weight: 400;
    line-height: 19px;
    text-align: left;
}
.card th + th {
    border-left: 1px solid #6e6e6e;
}
.card .act {
    width: 34px;
}
.card td {
    height: 20px;
    padding: 0 8px;
    background: #fff;
    line-height: 19px;
}
.card tr + tr td {
    border-top: 1px solid #ececec;
    background: #f5f5f5;
}
.card td svg {
    margin: 0 auto;
}
.pictures h3 {
    padding-left: 10px;
}
.pictures .mini:first-child {
    margin-left: 3px;
}
.dropzone {
    display: flex;
    align-items: center;
    width: 126px;
    height: 125px;
    border: 3px dashed #cfcfcf;
    line-height: 14px;
    text-align: center;
}
.vbar-form .thumb {
    height: 292px;
    margin: auto 0 4px;
}
.vbar-form {
    background: #f0f0f0;
}

/* Assets */
.assets {
    display: flex;
    min-height: 0;
    margin-right: 8px;
    border-right: 1px solid #fff;
    background: #dfe1e3;
}
.assets-main {
    flex: 1;
    min-width: 0;
}
.assets .side-head {
    height: 46px;
    padding: 0 5px 7px 9px;
}

/* Widget on the window edge */
.float {
    position: absolute;
    right: -1px;
    top: 525px;
    display: flex;
    flex-direction: column;
    align-items: center;
    justify-content: space-between;
    width: 23px;
    height: 42px;
    padding: 4px 2px 3px 0;
    border: 1px solid #84bf41;
    border-right: none;
    border-radius: 6px 0 0 6px;
    background: #fff;
}
.eye-able {
    width: 14px;
    height: 14px;
    border: 1px solid #14818a;
    border-radius: 4px;
    color: #14818a;
    font-size: 12px;
    font-weight: 700;
    line-height: 12px;
}
```
